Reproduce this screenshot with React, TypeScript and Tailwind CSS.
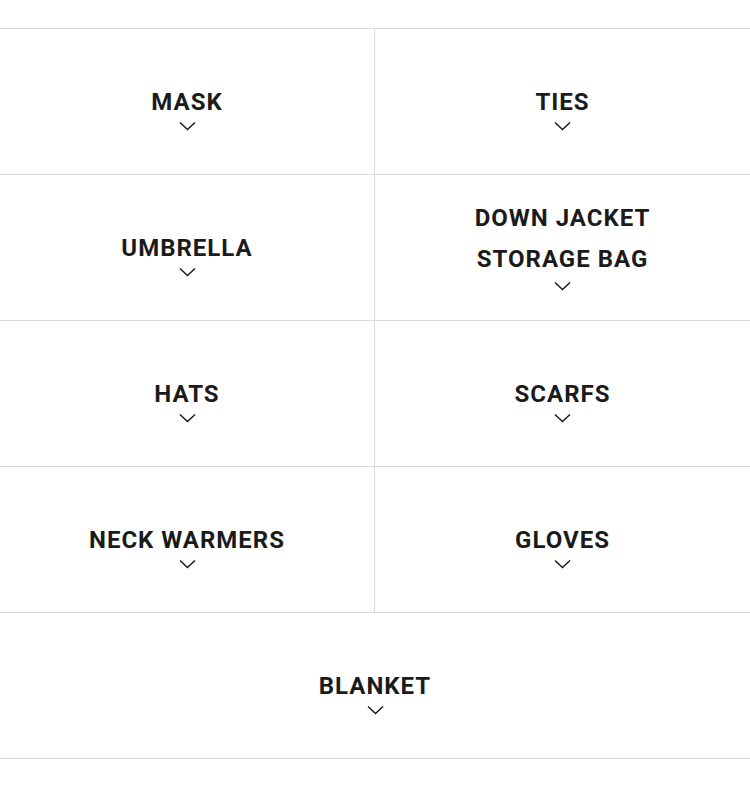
const items: string[][] = [
  ['MASK'],
  ['TIES'],
  ['UMBRELLA'],
  ['DOWN JACKET', 'STORAGE BAG'],
  ['HATS'],
  ['SCARFS'],
  ['NECK WARMERS'],
  ['GLOVES'],
];

function Chevron({ className }: { className: string }) {
  return (
    <svg width="17" height="10" viewBox="0 0 17 10" fill="none" className={className}>
      <path d="M1 1.5L8.5 8.5L16 1.5" stroke="#1b1b1b" strokeWidth="1.5" />
    </svg>
  );
}

function Cell({ lines, className }: { lines: string[]; className?: string }) {
  const multi = lines.length > 1;
  return (
    <button
      className={`flex h-[146px] flex-col items-center justify-center border-b border-[#dadada] bg-white ${
        multi ? 'pb-[6px]' : 'pt-[9px]'
      } ${className ?? ''}`}
    >
      <span className="flex flex-col items-center text-[24px] leading-[41px] font-bold tracking-[1px] text-[#1b1b1b]">
        {lines.map((l) => (
          <span key={l}>{l}</span>
        ))}
      </span>
      <Chevron className={multi ? 'mt-[1px]' : 'mt-[-2px]'} />
    </button>
  );
}

export default function App() {
  return (
    <div className="min-h-[787px] bg-white pt-[28px] font-['Roboto',sans-serif]">
      <div className="grid grid-cols-2 border-t border-[#dadada]">
        {items.map((lines, i) => (
          <Cell key={i} lines={lines} className={i % 2 === 0 ? 'border-r' : ''} />
        ))}
        <Cell lines={['BLANKET']} className="col-span-2" />
      </div>
    </div>
  );
}
